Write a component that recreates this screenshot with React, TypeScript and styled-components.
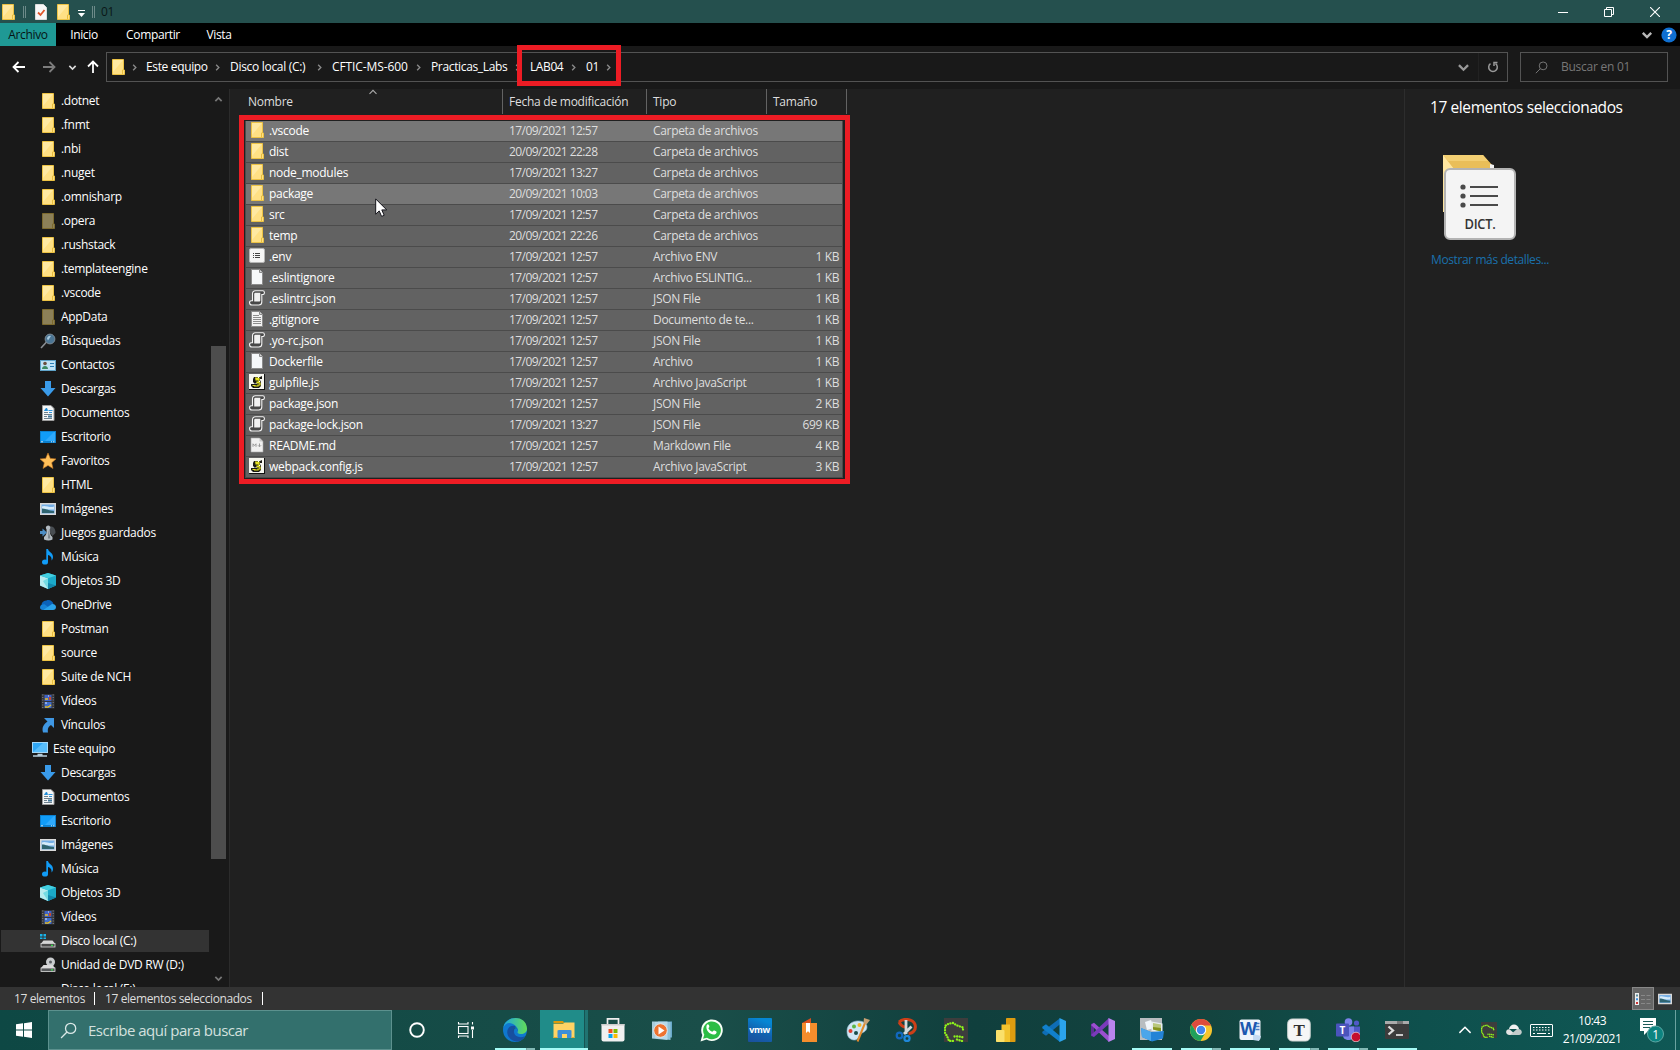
import React from 'react';
import styled, { createGlobalStyle, css } from 'styled-components';

const Global = createGlobalStyle`
  *, *::before, *::after { box-sizing: border-box; }
  html, body { margin: 0; padding: 0; background: #202020; overflow: hidden; }
  body { font-family: "Open Sans", "Noto Sans", sans-serif; font-size: 12px; line-height: 16px; letter-spacing: -0.3px; color: #fff; }
  svg { display: block; flex: none; }
`;

const Window = styled.div`
  position: relative;
  width: 1680px;
  height: 1050px;
  display: flex;
  flex-direction: column;
  overflow: hidden;
  background: #202020;
  white-space: nowrap;
`;

/* ---------- title, ribbon, navigation ---------- */

const TitleBar = styled.header`
  height: 23px;
  flex: none;
  display: flex;
  align-items: center;
  background: #25504e;
  color: #0b1717;
`;
const QuickAccess = styled.div`
  display: flex;
  align-items: center;
  width: 101px;
`;
const Caption = styled.span`
  flex: 1;
`;
const WindowButtons = styled.div`
  display: flex;
  padding-right: 2px;
`;
const WindowButton = styled.div`
  width: 46px;
  height: 20px;
  display: grid;
  place-items: center;
`;
const Ribbon = styled.nav`
  height: 23px;
  flex: none;
  display: flex;
  align-items: center;
  background: #000;
`;
const RibbonTab = styled.div<{ $width: number; $active?: boolean }>`
  width: ${p => p.$width}px;
  height: 23px;
  line-height: 24px;
  text-align: center;
  letter-spacing: -0.35px;
  ${p => p.$active && css`background: #1f9995; color: #061514;`}
`;
const RibbonEnd = styled.div`
  margin-left: auto;
  display: flex;
  align-items: center;
  gap: 8px;
  padding-right: 3px;
`;
const NavBar = styled.div`
  height: 43px;
  flex: none;
  display: flex;
  padding: 6px 12px 7px 0;
  background: #191919;
`;
const NavArrows = styled.div`
  width: 106px;
  height: 30px;
  display: flex;
  align-items: center;
  padding-left: 12px;
`;
const ArrowSlot = styled.div<{ $width: number }>`
  width: ${p => p.$width}px;
`;
const AddressBar = styled.div`
  width: 1402px;
  height: 30px;
  display: flex;
  align-items: center;
  border: 1px solid #535353;
  padding-left: 3px;
`;
const Crumb = styled.div<{ $width: number; $spacing: number }>`
  width: ${p => p.$width}px;
  display: flex;
  align-items: center;
  justify-content: space-between;
  letter-spacing: ${p => p.$spacing}px;
  line-height: 28px;
`;
const AddressTools = styled.div`
  margin-left: auto;
  display: flex;
  align-items: center;
  height: 28px;
`;
const ToolCell = styled.div<{ $divided?: boolean }>`
  width: 29px;
  height: 28px;
  display: grid;
  place-items: center;
  ${p => p.$divided && css`border-left: 1px solid #222;`}
`;
const SearchBox = styled.div`
  width: 148px;
  height: 30px;
  margin-left: 12px;
  display: flex;
  align-items: center;
  gap: 13px;
  padding-left: 14px;
  border: 1px solid #535353;
  color: #777;
  letter-spacing: -0.25px;
`;

/* ---------- body ---------- */

const Body = styled.div`
  height: 898px;
  flex: none;
  display: flex;
`;
const Sidebar = styled.aside`
  width: 230px;
  height: 898px;
  display: flex;
  background: #191919;
  border-right: 1px solid #2b2b2b;
`;
const Tree = styled.div`
  width: 210px;
  height: 898px;
  overflow: hidden;
  padding-right: 1px;
`;
const TreeRow = styled.div<{ $root?: boolean; $selected?: boolean }>`
  height: 22px;
  margin: 1px 0 2px 1px;
  padding-left: ${p => (p.$root ? 31 : 39)}px;
  display: flex;
  align-items: center;
  gap: 5px;
  ${p => p.$selected && css`background: #333;`}
`;
const ScrollBar = styled.div`
  width: 17px;
  height: 898px;
  display: flex;
  flex-direction: column;
  align-items: center;
  padding: 6px 0 4px;
  & > svg:last-child { margin-top: auto; }
`;
const Thumb = styled.div`
  width: 15px;
  height: 513px;
  margin-top: 242px;
  background: #4d4d4d;
`;
const Files = styled.main`
  width: 1174px;
  position: relative;
  padding-left: 9px;
`;
const HeaderRow = styled.div`
  display: grid;
  grid-template-columns: 264px 144px 120px 80px;
  height: 26px;
`;
const HeaderCell = styled.div<{ $pad?: number }>`
  height: 25px;
  line-height: 26px;
  padding-left: ${p => p.$pad ?? 6}px;
  border-right: 1px solid #636363;
  color: #dedede;
  letter-spacing: -0.25px;
`;
const SortMark = styled.div`
  position: absolute;
  left: 138px;
  top: -2px;
`;
const Rows = styled.div`
  width: 611px;
  height: 369px;
  padding: 1px 2px 0 1px;
  border: 5px solid #ed1c24;
`;
const FileRow = styled.div<{ $hot?: boolean }>`
  height: 21px;
  display: grid;
  grid-template-columns: 263px 144px 112px 1fr;
  align-items: center;
  background: ${p => (p.$hot ? '#777' : '#626262')};
  border-bottom: 1px solid #4b4b4b;
  border-left: 1px solid #4b4b4b;
  border-right: 1px solid #4b4b4b;
  color: #dedede;
`;
const FileName = styled.div`
  display: flex;
  align-items: center;
  gap: 4px;
  padding-left: 3px;
  color: #fff;
  letter-spacing: -0.28px;
  & > svg { margin-top: -2px; }
`;
const FileDate = styled.div`
  letter-spacing: -0.56px;
`;
const FileType = styled.div`
  letter-spacing: -0.33px;
`;
const Size = styled.div`
  text-align: right;
  padding-right: 3px;
  letter-spacing: -0.4px;
`;
const Details = styled.aside`
  flex: 1;
  border-left: 1px solid #2d2d2d;
  padding: 7px 0 0 25px;
`;
const DetailsTitle = styled.h1`
  margin: 0 0 37px;
  font-size: 15.5px;
  font-weight: 400;
  line-height: 22px;
  letter-spacing: -0.4px;
`;
const DetailsLink = styled.a`
  display: block;
  margin: 11px 0 0 1px;
  color: #1a70ac;
  letter-spacing: -0.4px;
`;

/* ---------- status bar ---------- */

const StatusBar = styled.footer`
  height: 23px;
  flex: none;
  display: flex;
  align-items: center;
  padding-left: 14px;
  background: #333;
  color: #dedede;
  letter-spacing: -0.4px;
`;
const StatusItem = styled.div<{ $width: number }>`
  width: ${p => p.$width}px;
  height: 13px;
  line-height: 14px;
  margin-right: 10px;
  border-right: 1px solid #fff;
`;
const Views = styled.div`
  margin-left: auto;
  display: flex;
  align-items: center;
  gap: 4px;
  padding-right: 8px;
`;
const ViewButton = styled.div`
  width: 22px;
  height: 23px;
  display: grid;
  place-items: center;
  background: #666;
  border: 1px solid #888;
`;

/* ---------- taskbar ---------- */

const Taskbar = styled.div`
  height: 40px;
  flex: none;
  display: flex;
  background: linear-gradient(90deg, #0e4844 0%, #164c47 30%, #1a4e49 42%, #103f3d 58%, #13443f 72%, #0e4f4c 83%, #0f5855 100%);
`;
const Start = styled.div`
  width: 48px;
  display: grid;
  place-items: center;
`;
const TaskSearch = styled.div`
  width: 344px;
  height: 40px;
  display: flex;
  align-items: center;
  gap: 11px;
  padding-left: 11px;
  border: 1px solid #5c918e;
  background: #33706d;
  color: #d3e0df;
  font-size: 15px;
  letter-spacing: -0.48px;
`;
const Apps = styled.div`
  display: flex;
  gap: 1px;
  padding-left: 1px;
`;
const AppButton = styled.div<{ $active?: boolean }>`
  width: 48px;
  height: 40px;
  display: flex;
  flex-direction: column;
  align-items: center;
  background: ${p => (p.$active ? 'linear-gradient(90deg,#208c89 44px,#165453 44px,#165453 45px,#207371 45px)' : 'none')};
`;
const AppIcon = styled.div`
  height: 38px;
  padding-top: 2px;
  display: grid;
  place-items: center;
`;
const Underline = styled.div<{ $kind?: string }>`
  width: ${p => (p.$kind === 'full' ? 48 : 40)}px;
  height: 2px;
  background: ${p =>
    p.$kind === 'stack'
      ? 'linear-gradient(90deg,#a6fbf6 31px,#5a8885 31px,#83b9b5 32px)'
      : p.$kind
      ? '#a6fbf6'
      : 'transparent'};
`;
const Tray = styled.div`
  margin-left: auto;
  display: flex;
  align-items: center;
`;
const TraySlot = styled.div<{ $width: number }>`
  width: ${p => p.$width}px;
  display: grid;
  place-items: center;
`;
const Clock = styled.div`
  width: 72px;
  text-align: center;
  line-height: 18px;
  letter-spacing: -0.5px;
`;
const ShowDesktop = styled.div`
  width: 5px;
  height: 40px;
  border-left: 1px solid #6ba3a0;
`;

/* ---------- overlays ---------- */

const PathMark = styled.div`
  position: absolute;
  left: 517px;
  top: 45px;
  width: 104px;
  height: 41px;
  border: 5px solid #ed1c24;
`;
const Pointer = styled.svg`
  position: absolute;
  left: 375px;
  top: 198px;
`;

/* ---------- small icons ---------- */

const Chevron = ({ dir = 'down', size = 9, color = '#b5b5b5', weight = 1.5 }: { dir?: string; size?: number; color?: string; weight?: number }) => {
  const d: Record<string, string> = {
    down: 'M1.5 3.2 5 6.7 8.5 3.2',
    up: 'M1.5 6.8 5 3.3 8.5 6.8',
    right: 'M3.5 2 6.5 5 3.5 8',
  };
  return (
    <svg width={size} height={size} viewBox="0 0 10 10" fill="none" stroke={color} strokeWidth={weight}>
      <path d={d[dir]} />
    </svg>
  );
};

const Lens = ({ size, color }: { size: number; color: string }) => (
  <svg width={size} height={size} viewBox="0 0 16 16" fill="none" stroke={color} strokeWidth="1.2">
    <circle cx="10" cy="6" r="4.8" />
    <path d="M6.6 9.4 1 15" />
  </svg>
);

const Arrow = ({ turn = 0, color = '#fff' }: { turn?: number; color?: string }) => (
  <svg width="14" height="14" viewBox="0 0 14 14" fill="none" stroke={color} strokeWidth="1.8" transform={`rotate(${turn})`}>
    <path d="M13 7H1.8M6.5 2 1.5 7l5 5" />
  </svg>
);

type Kind =
  | 'folder' | 'dim' | 'search' | 'contact' | 'down' | 'doc' | 'desktop' | 'star' | 'image' | 'games' | 'music'
  | 'cube' | 'cloud' | 'video' | 'link' | 'pc' | 'drive' | 'dvd' | 'env' | 'blank' | 'json' | 'text' | 'js' | 'md' | 'none' | 'check';

const shapes: Record<Kind, React.ReactNode> = {
  none: null,
  folder: (
    <>
      <path d="M2.5.5h11v10.500h1v4.500h-12z" fill="#ffe084" stroke="#ecc244" />
      <path d="M3 1h10L3 13z" fill="#ffe9a2" />
      <path d="M12.500 15v-4l1.300-.7" fill="none" stroke="#e8bd3c" />
    </>
  ),
  dim: (
    <>
      <path d="M2.5.5h11v10.500h1v4.500h-12z" fill="#8c8058" stroke="#7c6a2e" />
      <path d="M12.5 15V11l1.3-.7" fill="none" stroke="#7c6a2e" />
    </>
  ),
  search: (
    <>
      <path d="M6.5 9 1 15" stroke="#8a8f94" strokeWidth="1.6" />
      <circle cx="10" cy="6" r="4.9" fill="#4b7594" stroke="#7b8993" />
      <path d="M7 5.5a3 3 0 0 1 4-2.5L8 7.500z" fill="#a9cbe0" />
    </>
  ),
  contact: (
    <>
      <rect x=".5" y="3.500" width="15" height="10" fill="#bfe3f7" stroke="#5fa3c9" />
      <circle cx="5" cy="6.500" r="1.800" fill="#6a5040" />
      <path d="M2 12c0-4 6-4 6 0z" fill="#3c8a63" />
      <path d="M10 6.500h4M10 9.500h4" stroke="#2a7fb8" />
    </>
  ),
  down: <path d="M5 0h6v7h4.500L8 15.500.5 7H5z" fill="#3a9bea" />,
  doc: (
    <>
      <path d="M2.500.5h8.500l3 3v12H2.500z" fill="#f4f6f7" stroke="#9c9c9c" />
      <path d="M4 7.500h4M4 9.500h8M4 11.500h3M4 13.500h8" stroke="#6d7f8b" />
      <path d="M4.500 5.500 6.500 3l1 2.500zM8.500 5.500h4M9 7.500h3" stroke="#1b8ad8" fill="#1b8ad8" strokeWidth=".9" />
      <rect x="8" y="10.500" width="4" height="2" fill="#41779c" />
    </>
  ),
  desktop: (
    <>
      <rect x="0" y="2" width="16" height="12" fill="#0b80cf" />
      <path d="M1 3h14v9H1z" fill="#119cf7" />
      <path d="M5 12 14 3h1v9z" fill="#2fa9fb" />
      <path d="M1 12.800h2M11 12.800h1M13 12.800h1.500" stroke="#fff" strokeWidth=".8" />
    </>
  ),
  star: <path d="m8 0 2.300 5.400 5.700.5-4.300 3.800L13 15.500 8 12.400 3 15.500l1.300-5.800L0 5.900l5.700-.5z" fill="#ffc05a" stroke="#c8771e" strokeWidth=".6" />,
  image: (
    <>
      <rect x=".75" y="2.750" width="14.500" height="10.500" fill="#74aee6" stroke="#d9d9d9" strokeWidth="1.500" />
      <path d="M2 5.500c3-2 8 2 12 0v3H2z" fill="#d5ebfa" />
      <path d="M2 7.500c4 0 6 2 12 2.500v2H2z" fill="#2f6470" />
    </>
  ),
  games: (
    <>
      <path d="M9 1.500c4-1 6.500 2 6.500 6.500l-3 3-3-4z" fill="#484d52" />
      <path d="M8 .5a2.200 2.200 0 0 1 1.700 3.700C9.700 8 10 10 12.500 12v2.500q-4 2-8.500 0V12C6.300 10 6.800 8 6.500 4.200A2.200 2.200 0 0 1 8 .5z" fill="#b3bcc3" />
      <path d="M8.500 5 10.500 13.500H8z" fill="#7b858c" />
      <path d="M0 6h2.500V3.500L7 7.500l-4.500 4V9H0z" fill="#4c8dc4" />
    </>
  ),
  music: (
    <>
      <ellipse cx="5" cy="13" rx="3" ry="2.600" fill="#119cf7" />
      <path d="M6.300 13V0h1.700c.5 3 5 3.500 5 8 0 1.500-.6 2.500-1.400 3.500C12 8 10 6.500 8 6v7z" fill="#119cf7" />
    </>
  ),
  cube: (
    <>
      <path d="m8 0 8 2.500v10L8 16l-8-3.500v-10z" fill="#1ba9c8" />
      <path d="m0 2.500 8 2.700V16l-8-3.500z" fill="#b8ebef" />
      <path d="M8 0 0 2.500l8 2.700 8-2.700z" fill="#43cfe0" />
      <path d="m3 8 5-2.800V16z" fill="#73dbe3" />
      <path d="m8 10 8 2.500L8 16z" fill="#1286ab" />
    </>
  ),
  cloud: (
    <>
      <path d="M2 9a4.500 4 0 0 1 4.500-5.500C9 2 13 4 13.500 7L8 11z" fill="#0a62ba" />
      <path d="M0 10.500C0 8 2.500 7 4.500 7.300L12 13H3c-2 0-3-1-3-2.500z" fill="#1682d6" />
      <path d="M4 12.500 12 7c2.500-.3 4 1.300 4 3s-1.200 3-3 3H4z" fill="#2aa3ea" />
    </>
  ),
  video: (
    <>
      <rect x="1.500" y="1" width="13" height="14.500" fill="#35363a" />
      <path d="M2.800 1.500v14M13.200 1.500v14" stroke="#8a8a8a" strokeDasharray="1 1.500" />
      <rect x="4.500" y="2" width="7" height="6" fill="#3f62c4" />
      <rect x="4.500" y="9" width="7" height="6" fill="#3f6fd0" />
      <path d="M5 6h3M5 14h3l3-2" stroke="#e3bd2e" strokeWidth="1.500" />
      <path d="M9 4h2v3H9z" fill="#c9482c" />
      <path d="M5 10h2M8 3h1" stroke="#dfe9ff" />
    </>
  ),
  link: <path d="M4 1h10v10l-3-3C8 10 7.500 12 8 15.500H3C1.500 10 4 7 7.500 4.500z" fill="#3f97e3" />,
  pc: (
    <>
      <rect x=".5" y="1.500" width="15" height="10" fill="#2fa7f5" stroke="#a4d8f8" />
      <path d="M1 11 11 2h4v9z" fill="#58bdfa" />
      <path d="M5.500 13.500h5M1 15h14" stroke="#b5cddb" strokeWidth="1.300" />
    </>
  ),
  drive: (
    <>
      <path d="M0 1h2.500v2.500H0zM3.500 1H6v2.500H3.500zM0 4.500h2.500V6H0zM3.500 4.500H6V6H3.500z" fill="#19b4ea" />
      <path d="M3.500 7.500h9l2.500 3H1z" fill="#d6d6d6" />
      <rect x="1" y="10.500" width="14" height="3.500" fill="#4c4c4c" stroke="#dcdcdc" strokeWidth=".8" />
      <path d="M11 12.300h2" stroke="#37e04a" strokeWidth="1.300" />
    </>
  ),
  dvd: (
    <>
      <circle cx="10.500" cy="5" r="4.500" fill="#c9ccce" />
      <circle cx="10.500" cy="5" r="1.500" fill="#5b5f63" />
      <path d="M3.500 8h9l2.500 3H1z" fill="#dadada" />
      <rect x="1" y="11" width="14" height="3.500" fill="#55585a" stroke="#dcdcdc" strokeWidth=".8" />
      <path d="M11 12.800h2" stroke="#37e04a" strokeWidth="1.300" />
    </>
  ),
  env: (
    <>
      <rect x=".5" y=".5" width="15" height="14" rx="1.500" fill="#f5f5f5" stroke="#b5b5b5" />
      <path d="M6 5.500h5M6 7.500h5M6 9.500h5M4 5.500h1M4 7.500h1M4 9.500h1" stroke="#444" />
    </>
  ),
  blank: (
    <>
      <path d="M2.500.5h8l3 3v12h-11z" fill="#f6f8fa" stroke="#8c8c8c" />
      <path d="M10.500.5v3h3" fill="#d5d5d5" stroke="#8c8c8c" />
    </>
  ),
  text: (
    <>
      <path d="M2.500.5h8l3 3v12h-11z" fill="#f3f3f3" stroke="#8c8c8c" />
      <path d="M4 4.500h6M4 6.500h8M4 8.500h8M4 10.500h8M4 12.500h8" stroke="#8d8d8d" />
      <path d="M10.500.5v3h3" fill="#d5d5d5" stroke="#8c8c8c" />
    </>
  ),
  md: (
    <>
      <path d="M2 1h8.500l3.500 3.500V15H2z" fill="#f0f0f0" stroke="#aaa" strokeWidth=".6" />
      <path d="M10.500 1v3.500H14" fill="#c9c9c9" />
      <path d="M4 9.800V6.800l1.500 1.700L7 6.800v3M10.500 6.500v3M9 8.300l1.500 1.500L12 8.300" fill="none" stroke="#999" />
    </>
  ),
  json: (
    <>
      <path d="M3.500 10.700V4C3.500 1.800 4.500.8 6.500.8h7.300c2 0 2.200 3.200.4 3.700h-1.400V12c0 2-1 3-3 3H3C0 15-.2 10.800 2.200 10.700z" fill="#484848" stroke="#f4f4f4" strokeWidth="1.100" />
      <path d="M5.200 11V4.200c0-1 .4-1.500 1.300-1.500h4.800v7.600c0 .8-.5 1.200-1.200 1.200H5.200z" fill="#f1f1f1" />
    </>
  ),
  js: (
    <>
      <rect x="0" y="0" width="16" height="16" fill="#111" />
      <rect x="0" y="0" width="15" height="15" fill="#f6f6ef" />
      <path d="M5 3h6l2-1v3h-2v1l1 2v4l-2 2H4l-2-2v-2h4L4 8V5z" fill="#1a1a14" />
      <path d="M6 4h4v1H7v1h3v2H8v1h3v2H9v1H5M3.500 11.500h3" fill="none" stroke="#e6e320" strokeWidth="1.200" />
      <path d="M9 3.500h1M6.500 9.500h1M10 7.500h1" stroke="#fff" />
    </>
  ),
  check: (
    <>
      <path d="M2.500.5h8l3 3v12h-11z" fill="#f8f8f8" stroke="#ddd" />
      <path d="m5 8.500 2.500 2.500 4-5" fill="none" stroke="#e0562b" strokeWidth="1.800" />
    </>
  ),
};

const Icon = ({ kind, size = 16 }: { kind: Kind; size?: number }) => (
  <svg width={size} height={size} viewBox="0 0 16 16">{shapes[kind]}</svg>
);

/* ---------- taskbar icons ---------- */

const GLogo = ({ size }: { size: number }) => (
  <svg width={size} height={size} viewBox="0 0 24 24">
    <rect width="24" height="24" fill="#3d3d3d" />
    <path d="M19 11.500V9.500L13 7.500 9 5 5 5.500 1 8v7l2 3 2 5h4M10.500 18.500h4.500l4.500 1M13 21.500l5 1.500" fill="none" stroke="#8df31c" strokeWidth="2.300" strokeLinecap="round" strokeDasharray=".1 2.500" />
  </svg>
);

const LogoText = styled.text`
  font-family: "Open Sans", sans-serif;
  font-weight: 700;
  letter-spacing: 0;
`;
const SerifText = styled.text`
  font-family: "Liberation Serif", serif;
  font-weight: 700;
`;

const art: Record<string, React.ReactNode> = {
  cortana: <circle cx="12" cy="12" r="6.800" fill="none" stroke="#fff" strokeWidth="1.900" />,
  tasks: (
    <g fill="none" stroke="#fff" strokeWidth="1.100">
      <rect x="4.500" y="8.500" width="9.500" height="7" />
      <path d="M4.500 4v2h9.500V4M4.500 20v-2h9.500v2M18.500 4v2.500M18.500 12v8" />
      <path d="M17 8.500h3v3h-3z" fill="#fff" stroke="none" />
    </g>
  ),
  edge: (
    <>
      <defs>
        <linearGradient id="eg" x1="0" x2="1"><stop offset="0" stopColor="#1da5df" /><stop offset="1" stopColor="#62dc57" /></linearGradient>
      </defs>
      <circle cx="12" cy="12" r="12" fill="#0f78cf" />
      <path d="M.2 10C2-2.500 23-4 24 10.500c.2 4-3.500 6-7 5.500-2.500-.4-3-1.500-2-3C16 8 4-.5.2 10z" fill="url(#eg)" />
      <path d="M12.500 8.200C5 6 1 15 7.500 21c5 4.300 12 2.800 14.500-3-4 2.500-11 1-11-4.500 0-2 .7-3.500 1.500-5.300z" fill="#174f9f" />
      <path d="M14.800 13c1.500-4-6-4-5 3-.5-4 1-5.500 2.500-6.500 1.500.3 3 1.800 2.500 3.500z" fill="#165a58" />
    </>
  ),
  explorer: (
    <>
      <path d="M1.500 3H11l1.500 2.500H1.500z" fill="#dc9a0a" />
      <path d="M1.500 6h9.500l1.500-1.500h10V20h-21z" fill="#ffd364" />
      <path d="M5.500 20v-7.500L7 12h11l1.500.5V20H15v-4h-5v4z" fill="#3c8fd8" />
      <path d="M1.500 19.500h4M19.500 19.500h3" stroke="#e6aa2d" />
    </>
  ),
  store: (
    <>
      <path d="M6.500 6V.8h11V6" fill="none" stroke="#eee" strokeWidth="1.700" />
      <path d="M.5 6h23v15.500q0 2-2 2H2.500q-2 0-2-2z" fill="#f1f1f1" />
      <path d="M.5 6h23v1.500H.5z" fill="#cfcfcf" />
      <path d="M7.500 11h4v4h-4z" fill="#f04e23" /><path d="M12.500 11h4v4h-4z" fill="#7fba00" />
      <path d="M7.500 16h4v4h-4z" fill="#0ba4ee" /><path d="M12.500 16h4v4h-4z" fill="#ffb902" />
    </>
  ),
  media: (
    <>
      <path d="M8 3.500h14v16H8z" fill="#69a8c9" /><path d="M5 4h15.500v18l-15.500-2z" fill="#90c3da" />
      <path d="M2 3.500h15.500V22L2 20.500z" fill="#b9dcec" opacity=".9" />
      <circle cx="10.500" cy="12.500" r="6.800" fill="#ee7330" stroke="#dfe7ea" strokeWidth="1" />
      <path d="M8.500 8.500v8l6-4z" fill="#fff" />
    </>
  ),
  whatsapp: (
    <>
      <path d="M1.500 23.500 3.300 17A10.800 10.800 0 1 1 7.500 21.500z" fill="#f7fff7" />
      <path d="m4 20.800 1.300-4A8.900 8.900 0 1 1 8 19.700z" fill="#2bbd45" />
      <path d="M7.800 7c1-1.300 2-.6 2.500 1.200.3.900-.6 1.500-.9 2 1 1.800 2.200 2.800 4 3.500.8-.7 1.200-1.600 2-1.200 1.800.8 2.700 1 2 2.500-1 2-3.500 2-6 .6C8.500 14 6.500 10.500 7.800 7z" fill="#fff" />
    </>
  ),
  vmw: (
    <>
      <defs><linearGradient id="vm" x1="0" x2=".4" y1="1" y2="0"><stop offset="0" stopColor="#1b4f9c" /><stop offset=".5" stopColor="#1261ae" /><stop offset="1" stopColor="#0587d4" /></linearGradient></defs>
      <rect width="24" height="24" rx="1" fill="url(#vm)" />
      <LogoText x="1.300" y="15" fontSize="9" textLength="21" fill="#fff">vmw</LogoText>
    </>
  ),
  book: (
    <>
      <path d="M5 5 14 0v6z" fill="#d94e1f" /><path d="M5 5h15v19H5z" fill="#f58d2c" />
      <path d="M9 5h4v10l-2-1.800L9 15z" fill="#fff" />
    </>
  ),
  paint: (
    <>
      <path d="M1 13C1 5 9 1.500 16 3.500s6 9 1 11-4 8-9 7.500S1 18 1 13z" fill="#cfe6f3" stroke="#9bc1d6" strokeWidth=".6" />
      <circle cx="4.500" cy="13" r="2" fill="#df3d2e" /><circle cx="8" cy="8.500" r="2" fill="#5cb644" /><circle cx="13.500" cy="7" r="2" fill="#f3b52a" />
      <circle cx="10" cy="15" r="2" fill="#174d4a" />
      <path d="M19 5 11.500 23.500" stroke="#e28a2d" strokeWidth="2" /><path d="m18 0 6 2-3.500 4.500-3-1.500z" fill="#c8a174" />
    </>
  ),
  snip: (
    <>
      <path d="M4 4c4-4 14-3.500 16 2.500 1.500 5-2 9-6.500 9M4 4c2 4 4 5 7 5" fill="none" stroke="#cc3f18" strokeWidth="3" />
      <path d="M11 2v14M16.500 8.500 9 16" stroke="#d4d9dc" strokeWidth="2.800" />
      <circle cx="4.500" cy="17.500" r="2.800" fill="none" stroke="#1268bd" strokeWidth="2.200" /><circle cx="12" cy="20.500" r="2.600" fill="none" stroke="#1f87d8" strokeWidth="2.200" />
    </>
  ),
  g: <GLogo size={24} />,
  bi: (
    <>
      <rect x="13" y="0" width="9.500" height="24" rx=".8" fill="#dd9c10" /><path d="M8.500 6.500h8.500V24H8.500z" fill="#f2c32e" />
      <rect x="3" y="12" width="8.500" height="12" rx=".8" fill="#fae06a" />
    </>
  ),
  code: (
    <>
      <path d="m18 .2 0 6L4 17.800.3 15.300v-1.500z" fill="#0f6db5" />
      <path d="M18 24v-6L4 6.200.3 8.700v1.500z" fill="#1180cc" />
      <path d="M17.500 0 24 3v18l-6.500 3z" fill="#2ba4ec" />
    </>
  ),
  vs: (
    <>
      <path d="M0 6 3 4.800V19L0 18z" fill="#5c2e94" />
      <path d="M3 4.800 18 18v6L0 7z" fill="#9b4fd0" />
      <path d="M3 19 18 6V0L0 17z" fill="#7a3abb" />
      <path d="M17.500 0 24 3v18l-6.500 3z" fill="#ba84ef" />
    </>
  ),
  photos: (
    <>
      <path d="M0 0h22v22H0z" fill="#b8bdc0" /><path d="m5 4 6-2 3 8-7 2z" fill="#f1f6fa" />
      <path d="m11.500 3.500 11 2v9.500l-11-2z" fill="#e9eef0" /><path d="m13 5 8 1.500v7l-8-2z" fill="#b9c77d" /><path d="m13 9 8 1v3.500l-8-2z" fill="#87951f" />
      <path d="m1 10 10 4 13-1-1 7.500-11 3L2 19z" fill="#2383d6" /><path d="m1 10 10 4v9L2 19z" fill="#4ba6ea" />
    </>
  ),
  chrome: (
    <>
      <circle cx="12" cy="12" r="11" fill="#f6c52e" />
      <path d="M2.500 6.500A11 11 0 0 1 21.500 6.500L22 7.500H12L7.500 14z" fill="#dd4b3e" />
      <path d="M2.500 6.500A11 11 0 0 0 11.500 23l5-8.500-4.500 2L7.200 14z" fill="#1fa05b" />
      <circle cx="12" cy="12" r="5.200" fill="#fff" /><circle cx="12" cy="12" r="4.200" fill="#4285f0" />
    </>
  ),
  word: (
    <>
      <rect x="1.500" y="1.500" width="21" height="20.500" rx="2" fill="#eef4fb" />
      <path d="m15 16 8 2-2 5-6-1z" fill="#c4daf2" />
      <path d="M17.500 5.500h4M17.500 8.500h4M17.500 11.500h4" stroke="#4a7cc4" strokeWidth="1.300" />
      <LogoText x="2" y="17" fontSize="18" textLength="17" lengthAdjust="spacingAndGlyphs" fill="#1c58b0">W</LogoText>
    </>
  ),
  typora: (
    <>
      <rect x=".7" y="1" width="22.500" height="22" rx="4.500" fill="#f6f6f6" stroke="#d1d8d6" />
      <SerifText x="12" y="17.500" fontSize="17" textAnchor="middle" fill="#303030">T</SerifText>
    </>
  ),
  teams: (
    <>
      <circle cx="12.500" cy="4" r="3.800" fill="#7b83eb" /><circle cx="20.500" cy="5" r="2.600" fill="#5059c9" />
      <path d="M15 8.500h9v8a5 5 0 0 1-6 4z" fill="#5059c9" /><path d="M7 8.500h11v9c0 6-11 6-11 0z" fill="#7b83eb" />
      <rect x="0" y="5.500" width="13" height="13" rx="1" fill="#4b53bc" />
      <LogoText x="6.500" y="15.700" fontSize="10" textAnchor="middle" fill="#fff">T</LogoText>
      <circle cx="20" cy="19" r="4.800" fill="#c50f2e" stroke="#e9d2d6" strokeWidth=".8" />
    </>
  ),
  terminal: (
    <>
      <rect x="0" y="3" width="24" height="18" rx="1" fill="#3c3c3c" /><path d="M0 3h24v3H0z" fill="#aaa" /><path d="M12 3h6v3h-6z" fill="#777" />
      <path d="m3.500 8.500 4.500 4-4.500 4" fill="none" stroke="#ddd" strokeWidth="2.300" /><path d="M11 17h7" stroke="#eee" strokeWidth="1.600" />
    </>
  ),
};

const apps: [string, string?][] = [
  ['cortana'], ['tasks'],
  ['edge', 'stack'], ['explorer', 'full'], ['store'], ['media'], ['whatsapp'], ['vmw'], ['book'], ['paint'], ['snip'], ['g'],
  ['bi'], ['code'], ['vs'], ['photos', 'one'], ['chrome', 'stack'], ['word', 'one'], ['typora', 'stack'], ['teams', 'stack'], ['terminal', 'one'],
];

/* ---------- data ---------- */

const tree: [Kind, string][] = [
  ['folder', '.dotnet'], ['folder', '.fnmt'], ['folder', '.nbi'], ['folder', '.nuget'], ['folder', '.omnisharp'], ['dim', '.opera'],
  ['folder', '.rushstack'], ['folder', '.templateengine'], ['folder', '.vscode'], ['dim', 'AppData'], ['search', 'Búsquedas'],
  ['contact', 'Contactos'], ['down', 'Descargas'], ['doc', 'Documentos'], ['desktop', 'Escritorio'], ['star', 'Favoritos'],
  ['folder', 'HTML'], ['image', 'Imágenes'], ['games', 'Juegos guardados'], ['music', 'Música'], ['cube', 'Objetos 3D'],
  ['cloud', 'OneDrive'], ['folder', 'Postman'], ['folder', 'source'], ['folder', 'Suite de NCH'], ['video', 'Vídeos'],
  ['link', 'Vínculos'], ['pc', 'Este equipo'], ['down', 'Descargas'], ['doc', 'Documentos'], ['desktop', 'Escritorio'],
  ['image', 'Imágenes'], ['music', 'Música'], ['cube', 'Objetos 3D'], ['video', 'Vídeos'], ['drive', 'Disco local (C:)'],
  ['dvd', 'Unidad de DVD RW (D:)'], ['none', 'Disco local (E:)'],
];

const files: [Kind, string, string, string, string][] = [
  ['folder', '.vscode', '17/09/2021 12:57', 'Carpeta de archivos', ''],
  ['folder', 'dist', '20/09/2021 22:28', 'Carpeta de archivos', ''],
  ['folder', 'node_modules', '17/09/2021 13:27', 'Carpeta de archivos', ''],
  ['folder', 'package', '20/09/2021 10:03', 'Carpeta de archivos', ''],
  ['folder', 'src', '17/09/2021 12:57', 'Carpeta de archivos', ''],
  ['folder', 'temp', '20/09/2021 22:26', 'Carpeta de archivos', ''],
  ['env', '.env', '17/09/2021 12:57', 'Archivo ENV', '1 KB'],
  ['blank', '.eslintignore', '17/09/2021 12:57', 'Archivo ESLINTIG...', '1 KB'],
  ['json', '.eslintrc.json', '17/09/2021 12:57', 'JSON File', '1 KB'],
  ['text', '.gitignore', '17/09/2021 12:57', 'Documento de te...', '1 KB'],
  ['json', '.yo-rc.json', '17/09/2021 12:57', 'JSON File', '1 KB'],
  ['blank', 'Dockerfile', '17/09/2021 12:57', 'Archivo', '1 KB'],
  ['js', 'gulpfile.js', '17/09/2021 12:57', 'Archivo JavaScript', '1 KB'],
  ['json', 'package.json', '17/09/2021 12:57', 'JSON File', '2 KB'],
  ['json', 'package-lock.json', '17/09/2021 13:27', 'JSON File', '699 KB'],
  ['md', 'README.md', '17/09/2021 12:57', 'Markdown File', '4 KB'],
  ['js', 'webpack.config.js', '17/09/2021 12:57', 'Archivo JavaScript', '3 KB'],
];

const crumbs: [string, number, number][] = [
  ['Este equipo', 76, -0.35], ['Disco local (C:)', 94, -0.3], ['CFTIC-MS-600', 91, -0.1],
  ['Practicas_Labs', 91, -0.35], ['LAB04', 48, -0.4], ['01', 27, -0.4],
];

const CrumbList = styled.div`
  display: flex;
  gap: 8px;
  margin-left: 7px;
`;
const FirstChevron = styled.div`
  margin-left: 4px;
`;

export default function App() {
  return (
    <Window>
      <Global />
      <TitleBar>
        <QuickAccess>
          <Icon kind="folder" />
          <svg width="17" height="16"><path d="M7.500 2v12M9.500 2v12" stroke="#6d8a89" /></svg>
          <Icon kind="check" />
          <svg width="6" height="16" />
          <Icon kind="folder" />
          <svg width="28" height="16">
            <path d="M7 6.500h7" stroke="#fff" /><path d="M7 9h7l-3.500 4z" fill="#fff" />
            <path d="M21.500 2v12M23.500 2v12" stroke="#6d8a89" />
          </svg>
        </QuickAccess>
        <Caption>01</Caption>
        <WindowButtons>
          <WindowButton><svg width="10" height="10"><path d="M0 5.500h10" stroke="#fff" /></svg></WindowButton>
          <WindowButton><svg width="10" height="10" fill="none" stroke="#fff"><path d="M.5 2.500h7v7h-7zM2.500 2.500v-2h7v7h-2" /></svg></WindowButton>
          <WindowButton><svg width="10" height="10" stroke="#fff" strokeWidth="1.100"><path d="M0 0l10 10M10 0 0 10" /></svg></WindowButton>
        </WindowButtons>
      </TitleBar>
      <Ribbon>
        <RibbonTab $width={56} $active>Archivo</RibbonTab>
        <RibbonTab $width={56}>Inicio</RibbonTab>
        <RibbonTab $width={82}>Compartir</RibbonTab>
        <RibbonTab $width={50}>Vista</RibbonTab>
        <RibbonEnd>
          <Chevron size={12} color="#b8b8b8" weight={2} />
          <svg width="16" height="16" viewBox="0 0 16 16">
            <circle cx="8" cy="8" r="7.600" fill="#0f6fd1" />
            <LogoText x="8" y="12.300" fontSize="12" textAnchor="middle" fill="#fff">?</LogoText>
          </svg>
        </RibbonEnd>
      </Ribbon>
      <NavBar>
        <NavArrows>
          <ArrowSlot $width={30}><Arrow /></ArrowSlot>
          <ArrowSlot $width={26}><Arrow turn={180} color="#7d7d7d" /></ArrowSlot>
          <ArrowSlot $width={18}><Chevron size={9} color="#ddd" weight={1.8} /></ArrowSlot>
          <ArrowSlot $width={20}><Arrow turn={90} /></ArrowSlot>
        </NavArrows>
        <AddressBar>
          <Icon kind="folder" />
          <FirstChevron><Chevron dir="right" color="#8a8a8a" /></FirstChevron>
          <CrumbList>
            {crumbs.map(([label, w, spacing]) => (
              <Crumb key={label} $width={w} $spacing={spacing}>{label}<Chevron dir="right" color="#8a8a8a" /></Crumb>
            ))}
          </CrumbList>
          <AddressTools>
            <ToolCell><Chevron size={13} color="#999" weight={1.8} /></ToolCell>
            <ToolCell $divided>
              <svg width="12" height="12" viewBox="0 0 12 12" fill="none" stroke="#999" strokeWidth="1.500">
                <path d="M3.500 2.700A4.300 4.300 0 1 0 8.500 2.700M1.500 1.500h3.500v3.500" transform="matrix(-1 0 0 1 12 0)" />
              </svg>
            </ToolCell>
          </AddressTools>
        </AddressBar>
        <SearchBox><Lens size={13} color="#777" />Buscar en 01</SearchBox>
      </NavBar>
      <Body>
        <Sidebar>
          <Tree>
            {tree.map(([kind, label], i) => (
              <TreeRow key={i} $root={kind === 'pc'} $selected={kind === 'drive'}>
                <Icon kind={kind} />{label}
              </TreeRow>
            ))}
          </Tree>
          <ScrollBar>
            <Chevron dir="up" color="#777" weight={2} />
            <Thumb />
            <Chevron color="#777" weight={2} />
          </ScrollBar>
        </Sidebar>
        <Files>
          <HeaderRow>
            <HeaderCell $pad={9}>Nombre</HeaderCell>
            <HeaderCell>Fecha de modificación</HeaderCell>
            <HeaderCell>Tipo</HeaderCell>
            <HeaderCell>Tamaño</HeaderCell>
          </HeaderRow>
          <SortMark><Chevron dir="up" size={10} weight={1.1} color="#aaa" /></SortMark>
          <Rows>
            {files.map(([kind, name, date, type, size], i) => (
              <FileRow key={name} $hot={i === 0 || i === 3}>
                <FileName><Icon kind={kind} />{name}</FileName>
                <FileDate>{date}</FileDate>
                <FileType>{type}</FileType>
                <Size>{size}</Size>
              </FileRow>
            ))}
          </Rows>
        </Files>
        <Details>
          <DetailsTitle>17 elementos seleccionados</DetailsTitle>
          <svg width="100" height="86" viewBox="0 0 100 86">
            <path d="M13 0h40l11 12v40H13z" fill="#e9be59" />
            <path d="M13 0h40l5 6H18z" fill="#f3cf73" />
            <path d="m13 0 11 14-4 43h-7z" fill="#ffe6a0" />
            <path d="m60 9 4 1v6h-4z" fill="#f3f3f3" />
            <rect x="15" y="14" width="70" height="70" rx="5" fill="#f4f4f4" stroke="#b3b3b3" strokeWidth="2" />
            <path d="M40 32h28M40 41h28M40 50h28" stroke="#4a4a4a" strokeWidth="2.200" />
            <circle cx="33" cy="32" r="2.600" fill="#4a4a4a" /><circle cx="33" cy="41" r="2.600" fill="#4a4a4a" /><circle cx="33" cy="50" r="2.600" fill="#4a4a4a" />
            <text x="34.500" y="74" fontSize="14" fontWeight="600" textLength="31" lengthAdjust="spacingAndGlyphs" fill="#333">DICT.</text>
          </svg>
          <DetailsLink>Mostrar más detalles...</DetailsLink>
        </Details>
      </Body>
      <StatusBar>
        <StatusItem $width={81}>17 elementos</StatusItem>
        <StatusItem $width={158}>17 elementos seleccionados</StatusItem>
        <Views>
          <ViewButton>
            <svg width="16" height="14" viewBox="0 0 16 14">
              <path d="M0 1h4v12H0z" fill="#eee" />
              <path d="M6 3.500h4M11.500 3.500h4M6 7.500h4M11.500 7.500h4M6 11.500h4M11.500 11.500h4" stroke="#888" />
              <path d="M1 2.500h2v2H1z" fill="#5a8a9a" /><path d="M1 6.300h2v2H1z" fill="#3b8fe0" /><path d="M1 10h2v2H1z" fill="#c33" />
            </svg>
          </ViewButton>
          <Icon kind="image" size={14} />
        </Views>
      </StatusBar>
      <Taskbar>
        <Start>
          <svg width="16" height="16" fill="#fff"><path d="M0 2.300 7 1.300v6.300H0zM8 1.200 16 0v7.600H8zM0 8.500h7v6.300l-7-1zM8 8.500h8V16l-8-1.200z" /></svg>
        </Start>
        <TaskSearch><Lens size={17} color="#dbe8e7" />Escribe aquí para buscar</TaskSearch>
        <Apps>
          {apps.map(([name, kind]) => (
            <AppButton key={name} $active={name === 'explorer'}>
              <AppIcon><svg width="24" height="24" viewBox="0 0 24 24">{art[name]}</svg></AppIcon>
              <Underline $kind={kind} />
            </AppButton>
          ))}
        </Apps>
        <Tray>
          <TraySlot $width={24}><Chevron dir="up" size={16} color="#fff" weight={0.9} /></TraySlot>
          <TraySlot $width={24}><GLogo size={16} /></TraySlot>
          <TraySlot $width={25}>
            <svg width="16" height="12" viewBox="0 0 16 12">
              <path d="M3 5c1-6 9-6 10 0z" fill="#f1f1f1" /><path d="M3.500 11C-1 11-1 5 3.500 5.300L10 11z" fill="#e3e3e3" /><path d="M4 11l7-6c6-1 6 6 2 6z" fill="#c3cbca" />
            </svg>
          </TraySlot>
          <TraySlot $width={30}>
            <svg width="23" height="13" viewBox="0 0 23 13" fill="none" stroke="#fff">
              <rect x=".5" y=".5" width="22" height="12" rx=".5" />
              <path d="M3 3.500h17M3 6h17" strokeDasharray="1.500 1.500" /><path d="M3 9.500h2M7 9.500h9M18 9.500h2" />
            </svg>
          </TraySlot>
          <Clock>10:43<br />21/09/2021</Clock>
          <TraySlot $width={47}>
            <svg width="24" height="26" viewBox="0 0 24 26">
              <path d="M0 1h16v13H8l-4 4v-4H0z" fill="#fff" /><path d="M3 4.500h10M3 7.500h10M3 10.500h7" stroke="#1b5b58" />
              <circle cx="15.500" cy="17" r="8" fill="#0c8480" stroke="#5fa8a5" />
              <text x="15.500" y="21.500" fontSize="12" textAnchor="middle" fill="#fff">1</text>
            </svg>
          </TraySlot>
          <ShowDesktop />
        </Tray>
      </Taskbar>
      <PathMark />
      <Pointer width="13" height="20" viewBox="0 0 13 20">
        <path d="M.7.9v15.300l3.500-3.300 2.400 5.500 2.600-1.100-2.400-5.400h4.900z" fill="#fff" stroke="#15151c" />
      </Pointer>
    </Window>
  );
}
